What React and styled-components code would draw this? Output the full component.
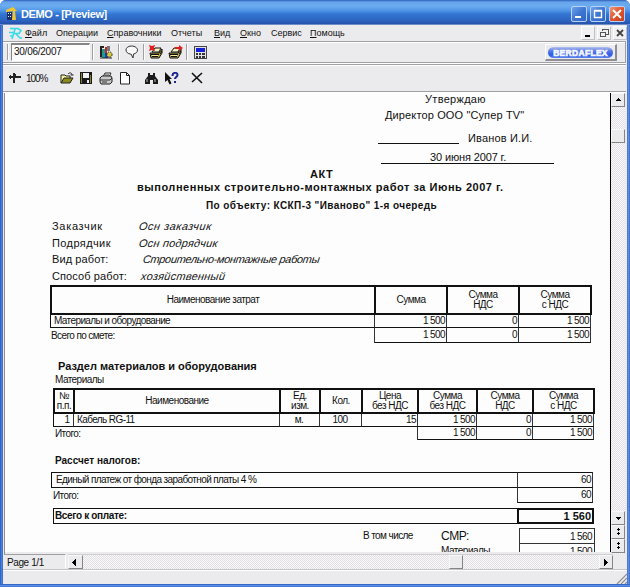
import React from 'react';
import styled, {createGlobalStyle, css} from 'styled-components';

const face = '#ebeaec';
const shadow = '#a0a0a2';
const ink = '#111';

const GlobalStyle = createGlobalStyle`
  * {
    box-sizing: border-box;
  }

  body {
    margin: 0;
    overflow: hidden;
    font-family: 'Liberation Sans', Arial, sans-serif;
    font-size: 10px;
    line-height: 1;
    color: ${ink};
  }
`;

const Window = styled.div`
  width: 630px;
  height: 587px;
  display: flex;
  flex-direction: column;
  border-radius: 6px 6px 0 0;
  overflow: hidden;
  background: linear-gradient(90deg, #2350b0 0, #4479da 1px, #4f86e2 2px, #2c5cbe 3px, #2c5cbe 627px, #6d9ae8 628px, #3469cc 630px);
`;

const TitleBar = styled.header`
  height: 25px;
  flex: none;
  display: flex;
  align-items: center;
  padding: 3px 5px 0 6px;
  background: linear-gradient(#2c5fbd 0, #68a4ea 2px, #6bacf0 6px, #559ae8 10px, #3376d2 14px, #2d66c2 20px, #2550aa 24px, #b9c8e6 25px);
`;

const Title = styled.h1`
  margin: 0 auto 0 3px;
  font-size: 11px;
  font-weight: bold;
  letter-spacing: -0.36px;
  color: #fff;
  white-space: pre;
`;

const CaptionButton = styled.button`
  width: 16px;
  height: 16px;
  margin-left: 3px;
  padding: 0;
  display: flex;
  border: 1px solid #b9d1f5;
  border-radius: 2px;
  background: ${({$close}) =>
    $close
      ? 'linear-gradient(135deg, #f0997c, #e0532c 50%, #c83e1c)'
      : 'linear-gradient(135deg, #6ea3ea, #3f76d2 50%, #3268c6)'};
`;

const Client = styled.div`
  flex: 1;
  min-height: 0;
  margin: 0 3px 0 3px;
  display: flex;
  flex-direction: column;
  background: ${face};
`;

const BottomFrame = styled.div`
  height: 3px;
  flex: none;
  background: linear-gradient(#2554b4, #5b8ee6, #3a6fd2);
`;

const MenuBar = styled.nav`
  height: 16px;
  flex: none;
  display: flex;
  align-items: center;
  padding-left: 6px;
`;

const MenuItem = styled.span`
  width: ${({$w}) => $w}px;
  padding-top: 1px;
  font-size: 9px;
  white-space: nowrap;

  &:first-of-type {
    margin-left: 2px;
  }

  & u {
    text-underline-offset: 1px;
  }
`;

const ChildButtons = styled.div`
  margin-left: auto;
  display: flex;
  gap: 2px;
`;

const raised = css`
  border: 1px solid;
  border-color: #fff #8e8e92 #8e8e92 #fff;
`;

const ChildButton = styled.button`
  width: 14px;
  height: 14px;
  padding: 0;
  display: flex;
  border: 1px solid;
  border-color: #fff #c2c2c6 #c2c2c6 #fff;
  background: #f1f0f2;
`;

const ToolBar = styled.div`
  height: ${({$h}) => $h}px;
  flex: none;
  margin-right: 1px;
  display: flex;
  align-items: center;
  border-top: 1px solid ${shadow};
  border-bottom: 1px solid ${shadow};
  border-right: ${({$edge}) => ($edge ? `1px solid ${shadow}` : 'none')};
  box-shadow: inset 0 1px #fff, 0 1px #fff;
`;

const ToolGap = styled.div`
  height: 1px;
  flex: none;
`;

const Grip = styled.i`
  width: 2px;
  height: 16px;
  margin-left: ${({$gap = 5}) => $gap}px;
  border-left: 1px solid ${shadow};
  border-right: 1px solid #fff;
`;

const DateField = styled.div`
  width: 79px;
  height: 18px;
  margin-left: 2px;
  padding: 2px 0 0 2px;
  border: 1px solid;
  border-color: #858585 #fff #fff #858585;
  border-width: 2px 1px 1px 1px;
  background: #fcfcfc;
  letter-spacing: -0.25px;
`;

const Glyph = styled.svg`
  flex: none;
  display: block;
  margin-left: ${({$gap = 0}) => $gap}px;
`;

const BrandButton = styled.div`
  ${raised}
  width: 72px;
  height: 17px;
  margin: 0 8px 0 auto;
  padding: 2px;
  border-width: 1px 2px 2px 1px;
`;

const BrandPill = styled.div`
  height: 11px;
  border-radius: 6px;
  text-align: center;
  font-size: 8.5px;
  font-weight: 900;
  line-height: 12px;
  letter-spacing: 0.3px;
  color: #fff;
  -webkit-text-stroke: 0.7px #eef2ff;
  background: linear-gradient(#b4c2ee 0, #5577e2 4px, #2b5bea 8px, #5e82ee 11px);
`;

const Zoom = styled.span`
  width: 34px;
  margin: 1px 0 0 4px;
  letter-spacing: -1.1px;
`;

const Viewer = styled.div`
  height: 461px;
  flex: none;
  display: flex;
  margin: 1px 2px 0 1px;
  border-left: 1px solid #8e8e8e;
`;

const Sheet = styled.main`
  flex: 1;
  min-width: 0;
  height: 459px;
  overflow: hidden;
  background: #fdfdfd;
  border-right: 1px solid #000;
`;

const track = css`
  background: conic-gradient(#e2e0e4 25%, #f8f7f9 0 50%, #e2e0e4 0 75%, #f8f7f9 0) 0 0 / 2px 2px;
`;

const VScroll = styled.div`
  ${track}
  width: 14px;
  flex: none;
  display: flex;
  flex-direction: column;
`;

const BarButton = styled.div`
  width: ${({$w = 14}) => $w}px;
  height: 14px;
  flex: none;
  margin-top: ${({$top = 0}) => $top}px;
  margin-left: ${({$left = 0}) => $left}px;
  background: ${face};
  border: 1px solid;
  border-color: #f8f8f8 #858588 #858588 #f8f8f8;
`;

const PageRow = styled.div`
  height: 16px;
  flex: none;
  display: flex;
  border-bottom: 1px solid #c4c3c8;
`;

const PageLabel = styled.div`
  width: 62px;
  margin: 0 2px 1px 1px;
  padding: 3px 0 0 3px;
  border-top: 1px solid ${shadow};
  border-right: 1px solid #fff;
  letter-spacing: -0.4px;
`;

const HScroll = styled.div`
  ${track}
  width: 545px;
  display: flex;
  border-top: 1px solid #cfced2;
`;

const StatusBar = styled.footer`
  flex: 1;
  display: flex;
  align-items: flex-end;
  justify-content: flex-end;
  border-top: 1px solid #fff;
`;

// one line of report text, x is the distance from the sheet's left edge
const Line = styled.div`
  height: ${({$h}) => $h}px;
  margin-top: ${({$top = 0}) => $top}px;
  padding-left: ${({$x}) => $x}px;
  display: flex;
  align-items: center;
`;

const Text = styled.span`
  width: ${({$w}) => ($w ? `${$w}px` : 'auto')};
  flex: none;
  font-size: ${({$size = 11}) => $size}px;
  font-weight: ${({$bold}) => ($bold ? 'bold' : 'normal')};
  letter-spacing: ${({$track = 0}) => $track}px;
  white-space: pre;
`;

const Slanted = styled(Text)`
  font-style: italic;
  transform: skewX(-8deg);
`;

const Signature = styled.span`
  width: 81px;
  height: 15px;
  align-self: flex-start;
  margin-right: 9px;
  border-bottom: 1px solid ${ink};
`;

const DateLine = styled.div`
  width: 173px;
  height: 13px;
  margin: 3px 0 4px 376px;
  padding-left: 49px;
  display: flex;
  align-items: center;
  border-bottom: 1px solid ${ink};
`;

const Table = styled.div`
  width: ${({$w}) => $w}px;
  margin: ${({$top = 0, $x}) => `${$top}px 0 0 ${$x}px`};
`;

const HeadRow = styled.div`
  height: ${({$h}) => $h}px;
  display: grid;
  grid-template-columns: ${({$cols}) => $cols};
  border: solid ${ink};
  border-width: 2px 0 2px 2px;
`;

const HeadCell = styled.div`
  display: flex;
  align-items: center;
  justify-content: center;
  border-right: 2px solid ${ink};
  text-align: center;
  line-height: 10.5px;
  letter-spacing: -0.5px;
  white-space: pre;
`;

const Row = styled.div`
  height: ${({$h}) => $h}px;
  display: grid;
  grid-template-columns: ${({$cols}) => $cols};
  border-left: 1px solid ${({$open}) => ($open ? 'transparent' : ink)};
`;

const Cell = styled.div`
  display: flex;
  align-items: center;
  justify-content: ${({$align = 'flex-end'}) => $align};
  padding: 0 1px 0 ${({$pad = 0}) => $pad}px;
  border-right: 1px solid #333;
  border-bottom: 1px solid ${ink};
  letter-spacing: -0.6px;
  white-space: pre;
`;

const OpenCell = styled(Cell)`
  border-bottom: none;
  justify-content: flex-start;
`;

const TaxCell = styled(Cell)`
  border-top: 1px solid ${ink};
`;

const Total = styled.div`
  width: 541px;
  height: 16px;
  margin: 5px 0 0 48px;
  display: flex;
  border: 1px solid ${ink};
  border-right: none;
`;

const TotalLabel = styled.div`
  flex: 1;
  padding: 2px 0 0 1px;
  font-weight: bold;
  letter-spacing: -0.35px;
`;

const TotalSum = styled.div`
  width: 77px;
  margin: -1px 0;
  padding: 1px 1px 0 0;
  border: 2px solid ${ink};
  text-align: right;
  font-size: 11px;
  font-weight: bold;
`;

const Breakdown = styled.div`
  display: grid;
  grid-template-columns: 78px 78px 76px;
  grid-auto-rows: 15px;
  margin: 4px 0 0 358px;
  align-items: center;
`;

const BreakdownSum = styled.div`
  height: 15px;
  padding: 3px 2px 0 0;
  border: 1px solid #333;
  border-bottom: none;
  text-align: right;
  letter-spacing: -0.6px;
`;

const Arrow = ({d}) => (
  <svg width="12" height="12" viewBox="0 0 12 12" shapeRendering="crispEdges">
    <path d={d} fill="#000" />
  </svg>
);

const DocsIcon = ({gap, toRight}) => (
  <Glyph $gap={gap} width="15" height="14" viewBox="0 0 15 14">
    <path d="M3 7l3-4h6l-2 4z" fill="#f8f6c0" stroke="#111" />
    <path d="M1 8h9l3-4v4l-3 5H2z" fill="#b9a93a" stroke="#111" />
    <path d="M2 9.500h8M3 11.500h6M11 9l2-3" stroke="#111" />
    <path d="M3 10.500h6" stroke="#f6eea0" />
    <path d={toRight ? 'M7 2h4V0l4 3-4 3V4H7z' : 'M0 0l3 1 3-1-1 3 1 3-3-1-3 1 1-3z'} fill="#e02020" />
  </Glyph>
);

const details = [
  {label: 'Заказчик', lt: 0.7, value: 'Осн заказчик', vt: 0.5, x: 87, h: 17},
  {label: 'Подрядчик', lt: 0.4, value: 'Осн подрядчик', vt: 0.2, x: 87, h: 16},
  {label: 'Вид работ:', lt: 0.1, value: 'Строительно-монтажные работы', vt: -0.33, x: 91, h: 17},
  {label: 'Способ работ:', lt: 0.1, value: 'хозяйственный', vt: 0.25, x: 89, h: 16},
];

const costCols = '324px 72px 72px 72px';
const itemCols = '20px 206px 40px 42px 56px 59px 56px 61px';
const itemTotalCols = '364px 59px 56px 61px';

const Menu = () => (
  <MenuBar>
    <Glyph width="14" height="14" viewBox="0 0 14 14">
      <path d="M1 2.500h8l3 2-2 3H5M6 3L3 13M0 6.500h4M1 10h3M7 8l4 4h2" fill="none" stroke="#35dce8" strokeWidth="1.600" />
    </Glyph>
    <MenuItem $w={31}><u>Ф</u>айл</MenuItem>
    <MenuItem $w={51}>Операции</MenuItem>
    <MenuItem $w={64}><u>С</u>правочники</MenuItem>
    <MenuItem $w={43}>Отчеты</MenuItem>
    <MenuItem $w={26}><u>В</u>ид</MenuItem>
    <MenuItem $w={31}><u>О</u>кно</MenuItem>
    <MenuItem $w={39}>Сервис</MenuItem>
    <MenuItem $w={40}><u>П</u>омощь</MenuItem>
    <ChildButtons>
      <ChildButton><Arrow d="M3 8h5v2H3z" /></ChildButton>
      <ChildButton>
        <svg width="12" height="12" viewBox="0 0 12 12" shapeRendering="crispEdges">
          <path d="M4 4V2h6v5H8M4 2.500h6M2.500 5h5v4h-5zM2 5.500h6" fill="none" stroke="#555" />
        </svg>
      </ChildButton>
      <ChildButton>
        <svg width="12" height="12" viewBox="0 0 12 12">
          <path d="M3 3l6 6M9 3L3 9" stroke="#444" strokeWidth="1.800" />
        </svg>
      </ChildButton>
    </ChildButtons>
  </MenuBar>
);

const MainTools = () => (
  <ToolBar $h={22} $edge>
    <Grip $gap={4} />
    <DateField>30/06/2007</DateField>
    <Grip $gap={2} />
    <Glyph $gap={5} width="15" height="14" viewBox="0 0 15 14">
      <path d="M1 1h4v2H3v9H1z" fill="#222" />
      <path d="M3 4h3v9H3z" fill="#1f9a8c" />
      <path d="M6 2h2v6H6z" fill="#c42828" />
      <path d="M8 1h3v5H8z" fill="#777" />
      <path d="M6 8h3v5H6z" fill="#2438b8" />
      <circle cx="10.500" cy="9.500" r="2.600" fill="#d8c83a" stroke="#222" strokeDasharray="1.5 1" />
      <path d="M1 13h12" stroke="#222" />
    </Glyph>
    <Grip $gap={4} />
    <Glyph $gap={5} width="14" height="14" viewBox="0 0 14 14">
      <path d="M6.500 1C3 1 1 3 1 5s2 4 4.500 4H6l2 4 .5-4C11 8.500 12.500 7 12.500 5S10 1 6.500 1z" fill="#fafafa" stroke="#333" />
    </Glyph>
    <Grip $gap={4} />
    <DocsIcon gap={4} />
    <DocsIcon gap={4} toRight />
    <Grip $gap={3} />
    <Glyph $gap={6} width="13" height="13" viewBox="0 0 13 13" shapeRendering="crispEdges">
      <path d="M0 0h13v13H0z" fill="#444" />
      <path d="M1 1h11v11H1z" fill="#e4e4e4" />
      <path d="M2 2h9v4H2z" fill="#1720d8" />
      <path d="M2 7h2v2H2zM5 7h2v2H5zM8 7h3v2H8zM2 10h2v2H2zM5 10h2v2H5zM8 10h3v2H8z" fill="#333" />
    </Glyph>
    <BrandButton><BrandPill>BERDAFLEX</BrandPill></BrandButton>
  </ToolBar>
);

const PreviewTools = () => (
  <ToolBar $h={28}>
    <Glyph $gap={6} width="13" height="12" viewBox="0 0 13 12" shapeRendering="crispEdges">
      <path d="M0 4h12v2H0zM4 1h2v10H4zM1 3h1v4H1zM6 2h1v3H6z" fill="#222" />
    </Glyph>
    <Zoom>100%</Zoom>
    <Glyph width="14" height="12" viewBox="0 0 14 12">
      <path d="M1 11V3h4l1 1h4v3" fill="#f6f2a0" stroke="#222" />
      <path d="M1 11l3-5h9l-3 5z" fill="#8d8a1c" stroke="#222" />
      <path d="M8 2c2-2 4-1 4 1M10.500 3h3" fill="none" stroke="#222" />
    </Glyph>
    <Glyph $gap={6} width="12" height="12" viewBox="0 0 12 12" shapeRendering="crispEdges">
      <path d="M0 0h12v12H0z" fill="#1a1a1a" />
      <path d="M3 1h6v5H3z" fill="#f2f2f2" />
      <path d="M1 1h1v10H1zM10 3h1v8h-1z" fill="#86842a" />
      <path d="M7 8h2v3H7z" fill="#eee" />
    </Glyph>
    <Glyph $gap={7} width="14" height="13" viewBox="0 0 14 13">
      <path d="M4 5l2-4h6l-2 4" fill="#fff" stroke="#222" />
      <path d="M1 6l2-2h9l1 2v4l-2 2H2l-1-2z" fill="#c8c8c8" stroke="#222" />
      <path d="M1 8h10l2-2M3 10h5M6 3h4" fill="none" stroke="#333" />
    </Glyph>
    <Glyph $gap={7} width="11" height="13" viewBox="0 0 11 13">
      <path d="M.5.5h6l3 3v8.500H.5z" fill="#fff" stroke="#222" />
      <path d="M6.500.5v3h3" fill="none" stroke="#222" />
    </Glyph>
    <Glyph $gap={14} width="13" height="12" viewBox="0 0 13 12">
      <path d="M3 1h2v2h3V1h2v3l3 4v4H8V8H5v4H0V8l3-4z" fill="#1a1a1a" />
      <path d="M2 7v3M10 7v3" stroke="#bbb" />
    </Glyph>
    <Glyph $gap={6} width="15" height="13" viewBox="0 0 15 13">
      <path d="M1 0v10l2.500-2 2 4.500 2-1L5.500 7H8z" fill="#111" />
      <path d="M8.500 4c0-4 5-4 5-1 0 2-2.500 2-2.500 4M11 9v2" fill="none" stroke="#1c2490" strokeWidth="2" />
    </Glyph>
    <Glyph $gap={12} width="12" height="12" viewBox="0 0 12 12">
      <path d="M1 1l10 10M11 1L1 10" stroke="#111" strokeWidth="1.600" />
    </Glyph>
  </ToolBar>
);

const Report = () => (
  <Sheet>
    <Line $h={12} $x={420}><Text $track={0.3}>Утверждаю</Text></Line>
    <Line $h={20} $x={380}><Text $track={0.13}>Директор ООО "Супер TV"</Text></Line>
    <Line $h={19} $top={4} $x={373}>
      <Signature />
      <Text $track={0.15}>Иванов И.И.</Text>
    </Line>
    <DateLine><Text $track={-0.13}>30 июня 2007 г.</Text></DateLine>
    <Line $h={12} $x={305}><Text $bold $track={0.5}>АКТ</Text></Line>
    <Line $h={14} $x={132}>
      <Text $bold $track={0.53}>выполненных строительно-монтажных работ за Июнь 2007 г.</Text>
    </Line>
    <Line $h={16} $top={4} $x={201}>
      <Text $bold $size={10} $track={0.4}>По объекту: КСКП-3 "Иваново" 1-я очередь</Text>
    </Line>
    <Line $h={4} $x={0} />
    {details.map(({label, lt, value, vt, x, h}) => (
      <Line key={label} $h={h} $x={47}>
        <Text $w={x} $track={lt}>{label}</Text>
        <Slanted $track={vt}>{value}</Slanted>
      </Line>
    ))}

    <Table $w={542} $top={1} $x={45}>
      <HeadRow $h={30} $cols={costCols}>
        <HeadCell>Наименование затрат</HeadCell>
        <HeadCell>Сумма</HeadCell>
        <HeadCell>{'Сумма\nНДС'}</HeadCell>
        <HeadCell>{'Сумма\nс НДС'}</HeadCell>
      </HeadRow>
      <Row $h={13} $cols={costCols}>
        <Cell $align="flex-start" $pad={3}>Материалы и оборудование</Cell>
        <Cell>1 500</Cell>
        <Cell>0</Cell>
        <Cell>1 500</Cell>
      </Row>
      <Row $h={15} $cols={costCols} $open>
        <OpenCell>Всего по смете:</OpenCell>
        <Cell>1 500</Cell>
        <Cell>0</Cell>
        <Cell>1 500</Cell>
      </Row>
    </Table>

    <Line $h={14} $top={16} $x={53}>
      <Text $bold $track={-0.02}>Раздел материалов и оборудования</Text>
    </Line>
    <Line $h={14} $x={50}><Text $size={10} $track={-0.55}>Материалы</Text></Line>

    <Table $w={542} $top={1} $x={48}>
      <HeadRow $h={26} $cols={itemCols}>
        <HeadCell>{'№\nп.п.'}</HeadCell>
        <HeadCell>Наименование</HeadCell>
        <HeadCell>{'Ед.\nизм.'}</HeadCell>
        <HeadCell>Кол.</HeadCell>
        <HeadCell>{'Цена\nбез НДС'}</HeadCell>
        <HeadCell>{'Сумма\nбез НДС'}</HeadCell>
        <HeadCell>{'Сумма\nНДС'}</HeadCell>
        <HeadCell>{'Сумма\nс НДС'}</HeadCell>
      </HeadRow>
      <Row $h={13} $cols={itemCols}>
        <Cell $align="center" $pad={8}>1</Cell>
        <Cell $align="flex-start" $pad={3}>Кабель RG-11</Cell>
        <Cell $align="center">м.</Cell>
        <Cell $align="center">100</Cell>
        <Cell>15</Cell>
        <Cell>1 500</Cell>
        <Cell>0</Cell>
        <Cell>1 500</Cell>
      </Row>
      <Row $h={13} $cols={itemTotalCols} $open>
        <OpenCell $pad={1}>Итого:</OpenCell>
        <Cell>1 500</Cell>
        <Cell>0</Cell>
        <Cell>1 500</Cell>
      </Row>
    </Table>

    <Line $h={14} $top={14} $x={50}>
      <Text $bold $size={10}>Рассчет налогов:</Text>
    </Line>

    <Table $w={542} $top={4} $x={46}>
      <Row $h={16} $cols="466px 75px">
        <TaxCell $align="flex-start" $pad={4}>Единый платеж от фонда заработной платы 4 %</TaxCell>
        <TaxCell>60</TaxCell>
      </Row>
      <Row $h={15} $cols="466px 75px" $open>
        <OpenCell $pad={1}>Итого:</OpenCell>
        <Cell>60</Cell>
      </Row>
    </Table>

    <Total>
      <TotalLabel>Всего к оплате:</TotalLabel>
      <TotalSum>1 560</TotalSum>
    </Total>

    <Breakdown>
      <Text $size={10} $track={-0.6}>В том числе</Text>
      <Text $size={12} $track={-0.4}>СМР:</Text>
      <BreakdownSum>1 560</BreakdownSum>
      <span />
      <Text $size={10} $track={-0.5}>Материалы</Text>
      <BreakdownSum>1 500</BreakdownSum>
    </Breakdown>
  </Sheet>
);

const App = () => (
  <>
    <GlobalStyle />
    <Window>
      <TitleBar>
        <Glyph width="12" height="14" viewBox="0 0 12 14">
          <path d="M1 5h5v8H1z" fill="#1c2f66" />
          <path d="M2 6h1v1H2zM4 6h1v1H4zM2 9h1v1H2zM4 9h1v1H4z" fill="#dfe8ff" />
          <path d="M0 3l7-3 4 4H9l1 9H6l1-9-7 1z" fill="#f3c52d" />
        </Glyph>
        <Title>DEMO - [Preview]</Title>
        <CaptionButton>
          <svg width="14" height="14"><path d="M3 9h6v2H3z" fill="#fff" /></svg>
        </CaptionButton>
        <CaptionButton>
          <svg width="14" height="14"><path d="M3.500 4h7v6.500h-7zM3 3.500h8" fill="none" stroke="#fff" strokeWidth="1.400" /></svg>
        </CaptionButton>
        <CaptionButton $close>
          <svg width="14" height="14"><path d="M3 3l8 8M11 3l-8 8" stroke="#fff" strokeWidth="2" /></svg>
        </CaptionButton>
      </TitleBar>
      <Client>
        <Menu />
        <MainTools />
        <ToolGap />
        <PreviewTools />
        <Viewer>
          <Report />
          <VScroll>
            <BarButton><Arrow d="M6 4h1v1h1v1h1v1H4V6h1V5h1z" /></BarButton>
            <BarButton $top={22} />
            <BarButton $top={368}><Arrow d="M4 5h5v1H8v1H7v1H6V7H5V6H4z" /></BarButton>
            <BarButton><Arrow d="M6 2h1v1h1v1H5V3h1zM6 4h1v1H6zM6 6h1v1h1v1H5V7h1zM6 8h1v1H6z" /></BarButton>
            <BarButton><Arrow d="M6 2h1v1H6zM5 3h3v1H7v1H6V4H5zM6 6h1v1H6zM5 7h3v1H7v1H6V8H5z" /></BarButton>
          </VScroll>
        </Viewer>
        <PageRow>
          <PageLabel>Page 1/1</PageLabel>
          <HScroll>
            <BarButton $w={15}><Arrow d="M7 3v7H6V9H5V8H4V7H3V6h1V5h1V4h1V3z" /></BarButton>
            <BarButton $left={366} />
            <BarButton $left={136}><Arrow d="M4 3h1v1h1v1h1v1h1v1H7v1H6v1H5v1H4z" /></BarButton>
          </HScroll>
        </PageRow>
        <StatusBar>
          <svg width="11" height="11" viewBox="0 0 11 11">
            <path d="M1 11L11 1M5 11l6-6M9 11l2-2" stroke="#8d8d92" strokeWidth="1.200" />
          </svg>
        </StatusBar>
      </Client>
      <BottomFrame />
    </Window>
  </>
);

export default App;
